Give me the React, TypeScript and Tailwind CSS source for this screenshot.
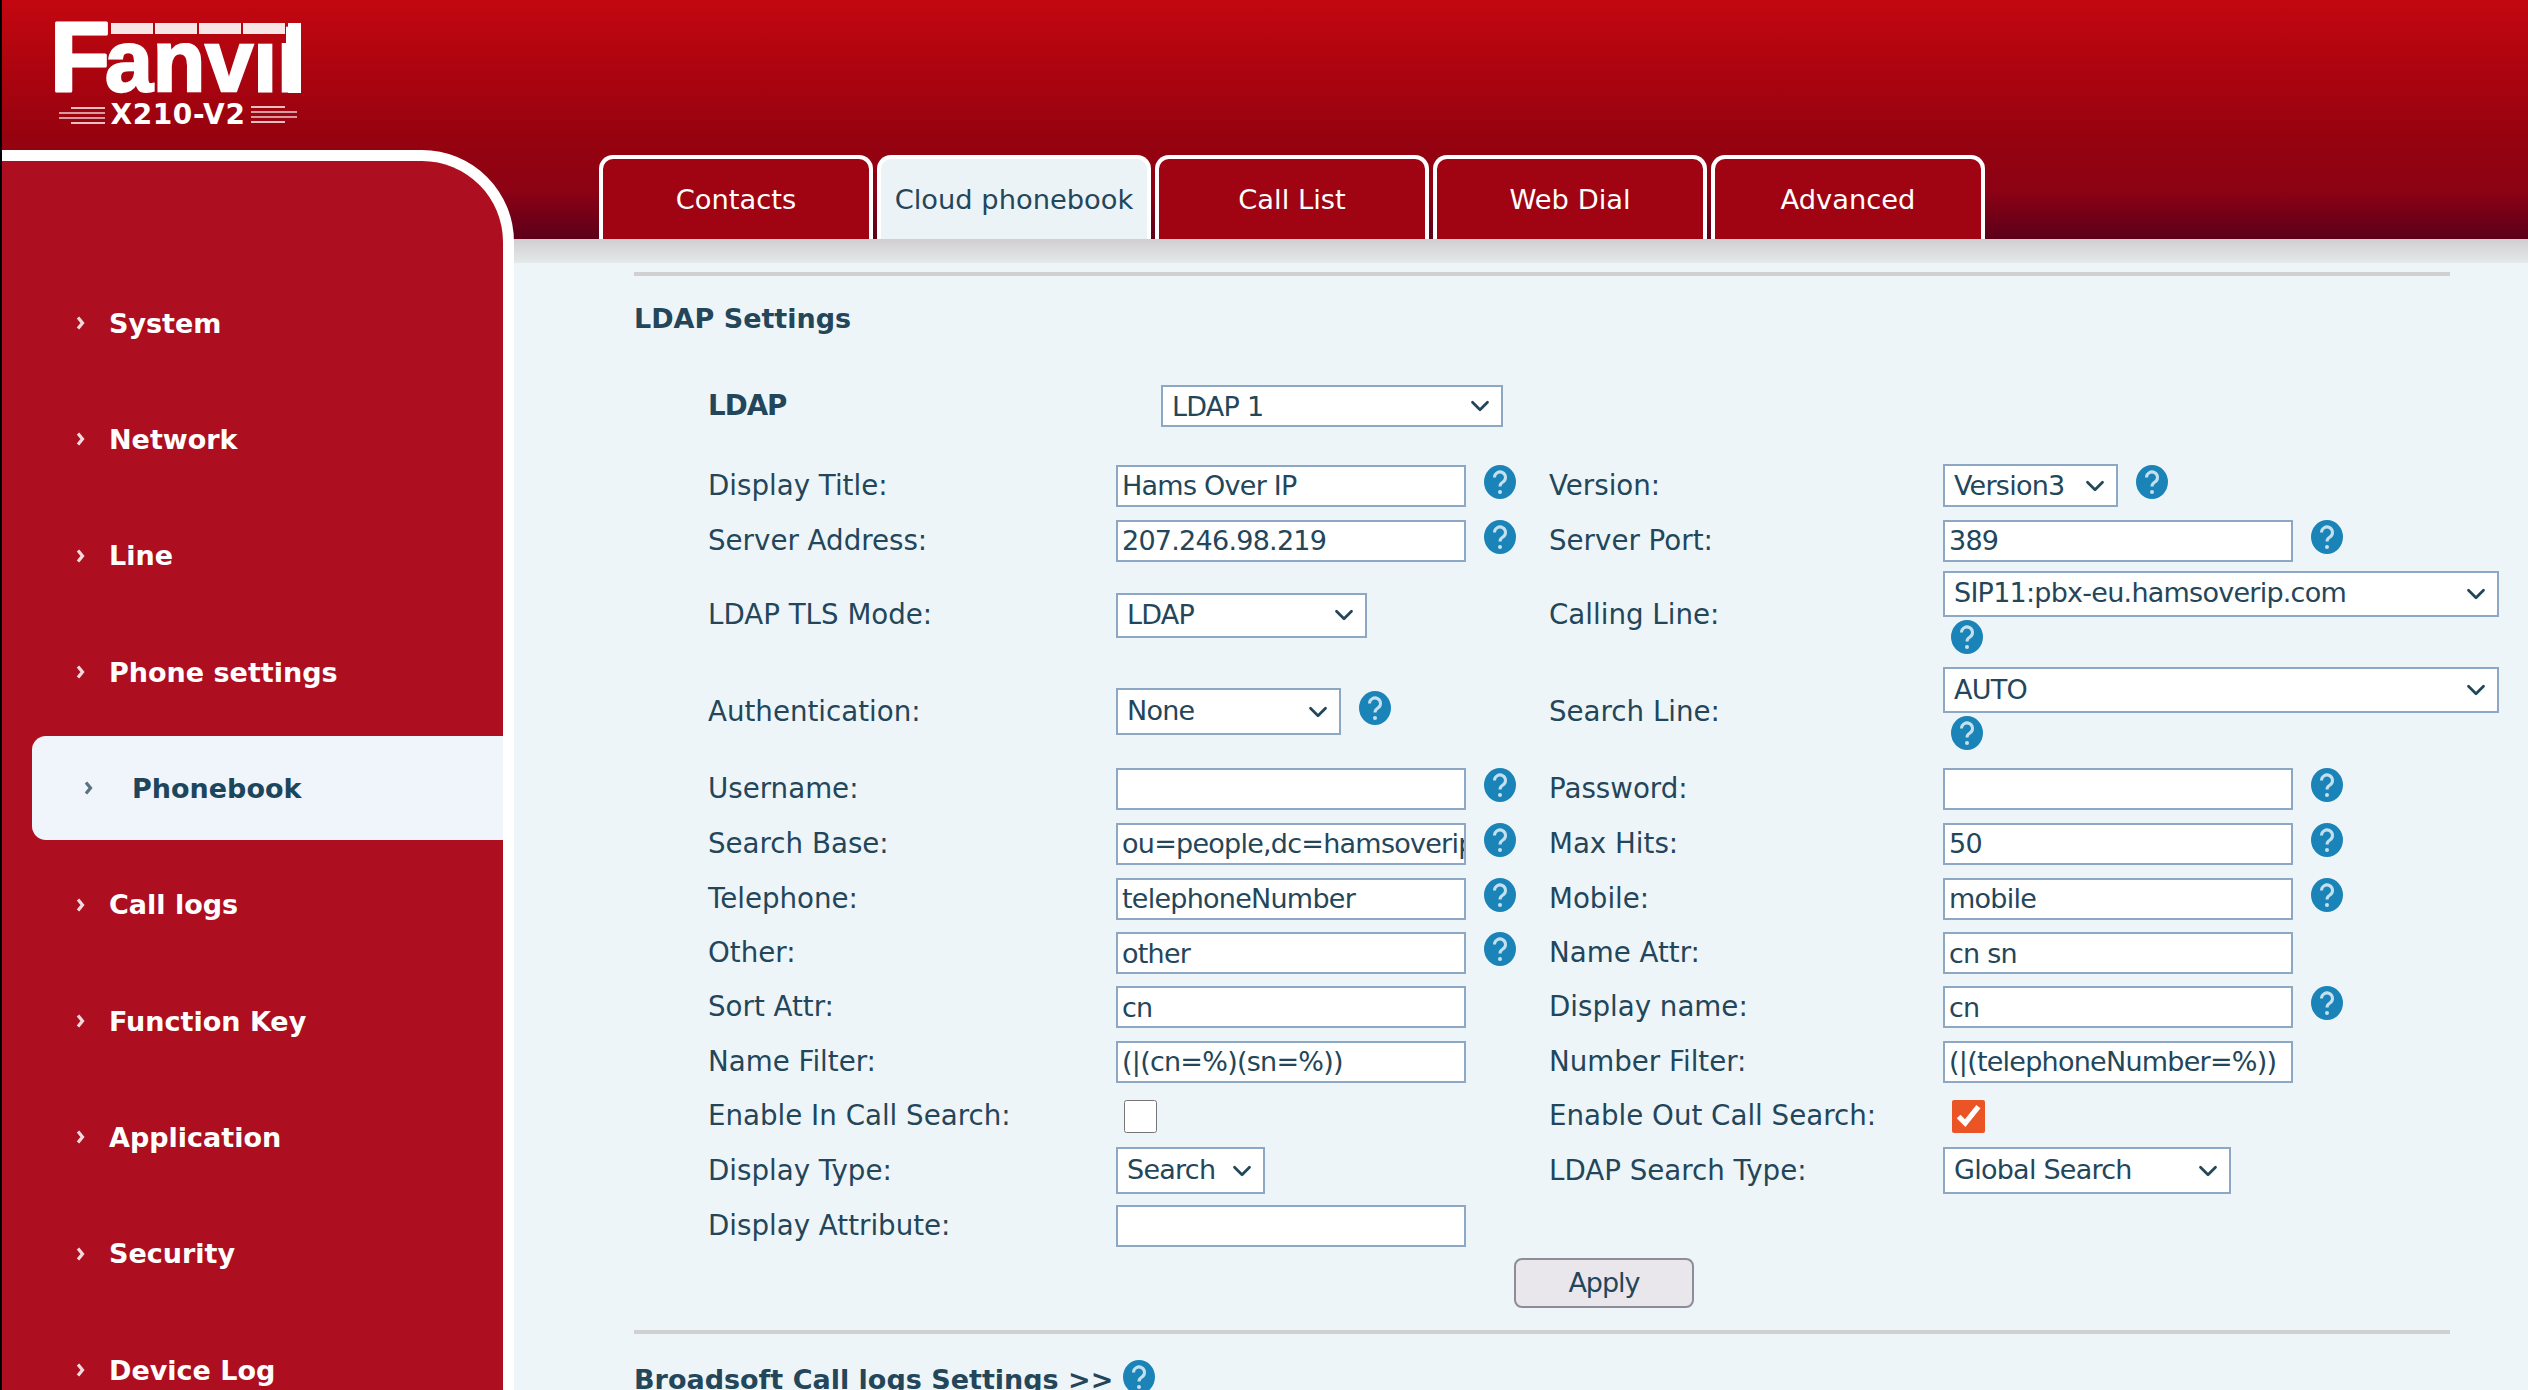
import type { ReactNode } from 'react';
import { ChevronDown } from 'lucide-react';

const NAV_ITEMS = ['System', 'Network', 'Line', 'Phone settings', 'Phonebook', 'Call logs', 'Function Key', 'Application', 'Security', 'Device Log'];
const TABS = ['Contacts', 'Cloud phonebook', 'Call List', 'Web Dial', 'Advanced'];

function Logo() {
  return (
    <div className="ml-[51px] mt-[23px] flex w-[250px] flex-col">
      <svg viewBox="0 0 250 72" className="h-[72px] w-[250px] overflow-visible">
        <text x="-3" y="68" fill="#fff" stroke="#fff" strokeWidth="3" strokeLinejoin="round" fontFamily="Liberation Sans" fontWeight="700" fontSize="98" textLength="60" lengthAdjust="spacingAndGlyphs">
          F
        </text>
        <text x="52" y="68" fill="#fff" stroke="#fff" strokeWidth="2.5" fontFamily="Liberation Sans" fontWeight="700" fontSize="88" textLength="196" lengthAdjust="spacingAndGlyphs">
          anvil
        </text>
        <rect x="57" y="0" width="176" height="20" fill="#B5050F" />
        {[58, 102, 146, 190].map((x) => (
          <rect key={x} x={x} y="0" width="42" height="11" fill="#fff" opacity="0.9" />
        ))}
        <rect x="235" y="0" width="13" height="70" fill="#fff" />
      </svg>
      <div className="mt-[5px] flex items-center justify-between px-[2px]">
        <SideLines flip={false} />
        <span className="text-[28px] leading-[30px] font-bold tracking-[0.6px] text-white">X210-V2</span>
        <SideLines flip />
      </div>
    </div>
  );
}

function SideLines({ flip }: { flip: boolean }) {
  return (
    <svg viewBox="0 0 50 18" className={`h-[18px] w-[50px] ${flip ? 'rotate-180' : ''}`}>
      <rect x="16" y="1" width="34" height="2" fill="#fff" opacity="0.75" />
      <rect x="4" y="6" width="46" height="2" fill="#fff" opacity="0.6" />
      <rect x="4" y="11" width="46" height="2" fill="#fff" opacity="0.6" />
      <rect x="16" y="16" width="34" height="2" fill="#fff" opacity="0.75" />
    </svg>
  );
}

function NavChevron({ color }: { color: string }) {
  return (
    <svg viewBox="0 0 9 14" className="h-[14px] w-[9px] shrink-0 -translate-y-[1px]">
      <path d="M2 1.5l4.5 5.5-4.5 5.5" fill="none" stroke={color} strokeWidth="3.2" opacity="0.85" />
    </svg>
  );
}

function NavItem({ label }: { label: string }) {
  if (label === 'Phonebook') {
    return (
      <div className="flex h-[116.3px] items-center pl-[30px]">
        <div className="-mt-[3px] flex h-[104px] flex-1 items-center gap-[39px] rounded-l-[14px] bg-[#EFF5FA] pt-[3px] pl-[52px] text-[#1D465C]">
          <NavChevron color="#3E5A6A" />
          <span>{label}</span>
        </div>
      </div>
    );
  }
  return (
    <div className="flex h-[116.3px] items-center gap-[24px] pl-[74px] text-white">
      <NavChevron color="#fff" />
      <span>{label}</span>
    </div>
  );
}

function Help({ className = '' }: { className?: string }) {
  return (
    <svg viewBox="0 0 32 34" className={`h-[34px] w-[32px] shrink-0 ${className}`}>
      <ellipse cx="16" cy="17" rx="16" ry="17" fill="#1A84B8" />
      <path d="M10.5 12.5a5.5 5.5 0 1 1 8.4 4.6c-2 1.3-2.9 2.3-2.9 4.4" fill="none" stroke="#C4E0EE" strokeWidth="3" />
      <circle cx="16" cy="27" r="2" fill="#C4E0EE" />
    </svg>
  );
}

function TextField({ value = '' }: { value?: string }) {
  return (
    <input
      readOnly
      value={value}
      className="h-[42px] w-[350px] shrink-0 border-2 border-[#8CA8C4] bg-white pl-[4px] text-[27px] tracking-[-0.75px] text-[#23465A] outline-none"
    />
  );
}

function Select({ value, className }: { value: string; className: string }) {
  return (
    <div className={`relative shrink-0 ${className}`}>
      <select
        defaultValue={value}
        className="h-full w-full appearance-none border-2 border-[#8CA8C4] bg-white pl-[9px] text-[27px] tracking-[-0.75px] text-[#23465A] outline-none"
      >
        <option>{value}</option>
      </select>
      <ChevronDown size={30} strokeWidth={2.2} className="pointer-events-none absolute top-1/2 right-[8px] -translate-y-1/2 text-[#23465A]" />
    </div>
  );
}

function Row({ height, children }: { height: string; children: ReactNode }) {
  return <div className={`grid grid-cols-[408px_433px_394px_556px] items-center ${height}`}>{children}</div>;
}

function Control({ children }: { children: ReactNode }) {
  return <div className="flex items-center gap-[18px]">{children}</div>;
}

function FieldRow({ left, leftValue, leftHelp, right, rightValue, rightHelp, height = 'h-[55px]' }: { left: string; leftValue: string; leftHelp?: boolean; right: string; rightValue: string; rightHelp?: boolean; height?: string }) {
  return (
    <Row height={height}>
      <span>{left}</span>
      <Control>
        <TextField value={leftValue} />
        {leftHelp && <Help className="-mt-[8px]" />}
      </Control>
      <span>{right}</span>
      <Control>
        <TextField value={rightValue} />
        {rightHelp && <Help className="-mt-[8px]" />}
      </Control>
    </Row>
  );
}

function LdapForm() {
  return (
    <div className="w-[1791px] pl-[74px] text-[27.7px]">
      <div className="flex h-[50px] items-center">
        <span className="w-[453px] font-bold tracking-[-1px]">LDAP</span>
        <Select value="LDAP 1" className="h-[42px] w-[342px]" />
      </div>
      <div className="mt-[27px]">
        <Row height="h-[55px]">
          <span>Display Title:</span>
          <Control>
            <TextField value="Hams Over IP" />
            <Help className="-mt-[8px]" />
          </Control>
          <span>Version:</span>
          <Control>
            <Select value="Version3" className="h-[43px] w-[175px]" />
            <Help className="-mt-[8px]" />
          </Control>
        </Row>
        <FieldRow left="Server Address:" leftValue="207.246.98.219" leftHelp right="Server Port:" rightValue="389" rightHelp />
        <Row height="h-[94px]">
          <span>LDAP TLS Mode:</span>
          <Select value="LDAP" className="h-[45px] w-[251px]" />
          <span>Calling Line:</span>
          <div className="-mt-[6px] flex flex-col items-start gap-[3px]">
            <Select value="SIP11:pbx-eu.hamsoverip.com" className="h-[46px] w-[556px]" />
            <Help className="ml-[8px]" />
          </div>
        </Row>
        <Row height="h-[99px]">
          <span>Authentication:</span>
          <Control>
            <Select value="None" className="h-[47px] w-[225px]" />
            <Help className="-mt-[8px]" />
          </Control>
          <span>Search Line:</span>
          <div className="-mt-[6px] flex flex-col items-start gap-[3px]">
            <Select value="AUTO" className="h-[46px] w-[556px]" />
            <Help className="ml-[8px]" />
          </div>
        </Row>
        <FieldRow left="Username:" leftValue="" leftHelp right="Password:" rightValue="" rightHelp />
        <FieldRow left="Search Base:" leftValue="ou=people,dc=hamsoverip,dc=com" leftHelp right="Max Hits:" rightValue="50" rightHelp />
        <FieldRow left="Telephone:" leftValue="telephoneNumber" leftHelp right="Mobile:" rightValue="mobile" rightHelp />
        <FieldRow left="Other:" leftValue="other" leftHelp right="Name Attr:" rightValue="cn sn" height="h-[54px]" />
        <FieldRow left="Sort Attr:" leftValue="cn" right="Display name:" rightValue="cn" rightHelp height="h-[54px]" />
        <FieldRow left="Name Filter:" leftValue="(|(cn=%)(sn=%))" right="Number Filter:" rightValue="(|(telephoneNumber=%))" />
        <Row height="h-[54px]">
          <span>Enable In Call Search:</span>
          <input type="checkbox" readOnly className="ml-[8px] h-[33px] w-[33px]" />
          <span>Enable Out Call Search:</span>
          <input type="checkbox" readOnly checked className="ml-[9px] h-[33px] w-[33px] accent-[#EB5424]" />
        </Row>
        <Row height="h-[55px]">
          <span>Display Type:</span>
          <Select value="Search" className="h-[47px] w-[149px]" />
          <span>LDAP Search Type:</span>
          <Select value="Global Search" className="h-[47px] w-[288px]" />
        </Row>
        <Row height="h-[55px]">
          <span>Display Attribute:</span>
          <TextField />
        </Row>
      </div>
      <button className="mt-[5px] ml-[806px] block h-[50px] w-[180px] rounded-[8px] border-2 border-[#8C8C9A] bg-[#E9E7EB] text-[27px] tracking-[-1px] text-[#23465A]">
        Apply
      </button>
    </div>
  );
}

export default function App() {
  return (
    <div className="flex h-screen flex-col overflow-hidden border-l-2 border-black bg-[#EEF5F8] font-['DejaVu_Sans',sans-serif] text-[27px] text-[#23465A]">
      <header className="flex h-[239px] shrink-0 bg-[linear-gradient(180deg,#C30710_0%,#98020F_55%,#8C0214_80%,#5C001A_100%)]">
        <div className="w-[597px] shrink-0">
          <Logo />
        </div>
        <nav className="flex items-end gap-[4px] self-end text-[27.3px]">
          {TABS.map((tab) => (
            <div
              key={tab}
              className={`flex h-[84px] w-[274px] items-center justify-center rounded-t-[14px] border-[4px] border-b-0 border-white pt-[2px] ${
                tab === 'Cloud phonebook' ? 'bg-[#ECF3F7] text-[#23465A]' : 'bg-[#A00412] text-white'
              }`}
            >
              {tab}
            </div>
          ))}
        </nav>
      </header>

      <div className="flex min-h-0 flex-1">
        {/* sidebar overlaps the header */}
        <aside className="relative z-10 -mt-[89px] w-[512px] shrink-0 rounded-tr-[92px] border-t-[11px] border-r-[11px] border-white bg-[#AE0F20] pt-[105px] font-bold">
          {NAV_ITEMS.map((item) => (
            <NavItem key={item} label={item} />
          ))}
        </aside>

        <main className="min-w-0 flex-1">
          <div className="h-[24px] bg-linear-to-b from-[#D2CED2] to-[#E4E9EA]" />
          <div className="pl-[120px]">
            <div className="mt-[9px] h-[4px] w-[1816px] bg-[#D0D0D0]" />
            <h2 className="mt-[26px] h-[33px] leading-[33px] font-bold">LDAP Settings</h2>
            <div className="mt-[46px]">
              <LdapForm />
            </div>
            <div className="mt-[22px] h-[4px] w-[1816px] bg-[#D0D0D0]" />
            <div className="mt-[26px] flex items-center gap-[10px]">
              <span className="font-bold">Broadsoft Call logs Settings &gt;&gt;</span>
              <Help className="-mt-[6px]" />
            </div>
          </div>
        </main>
      </div>
    </div>
  );
}
